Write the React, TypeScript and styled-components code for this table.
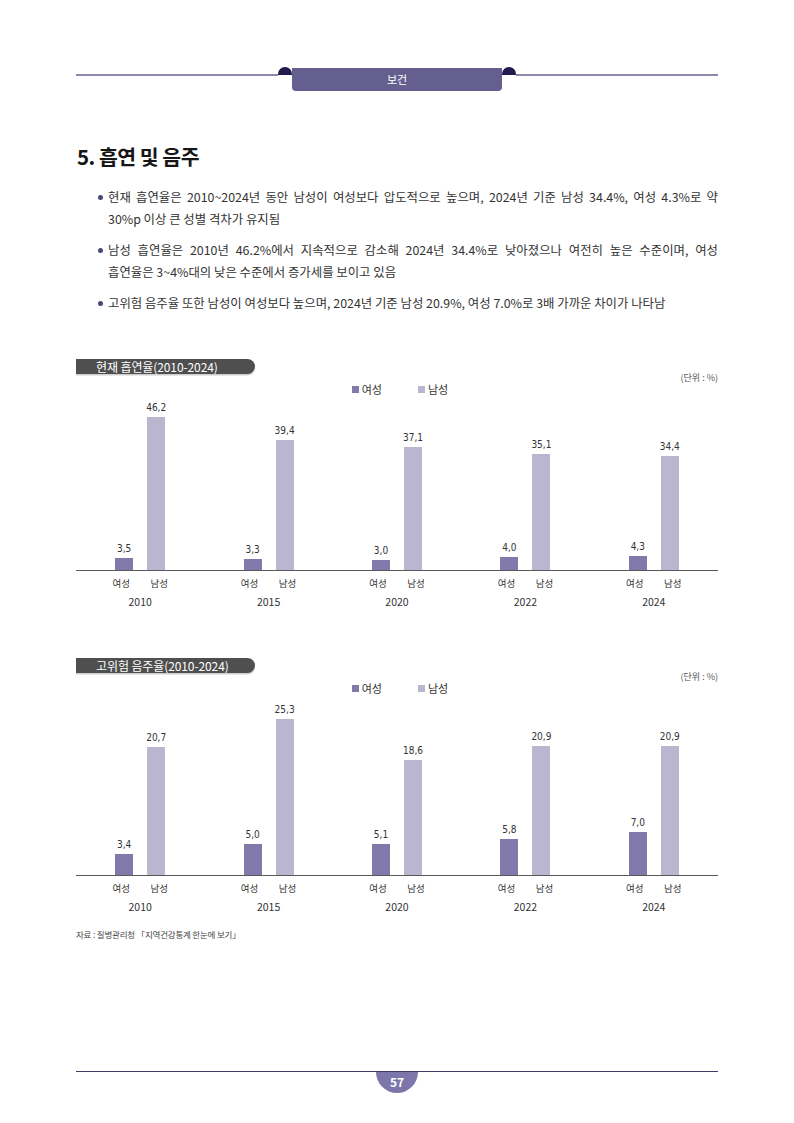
import styled, { createGlobalStyle } from 'styled-components';

const GlobalStyle = createGlobalStyle`
  html, body {
    margin: 0;
    padding: 0;
    background: #ffffff;
  }
  body {
    font-family: "Noto Sans CJK KR", "Noto Sans", sans-serif;
    color: #333333;
  }
`

const Page = styled.div`
    width: 794px;
    height: 1123px;
    box-sizing: border-box;
    padding: 67px 76px 30px;
    display: flex;
    flex-direction: column;
`

const Header = styled.header`
    display: flex;
    align-items: flex-start;
    height: 24px;
`

const HeaderLine = styled.div`
    flex: 1;
    height: 1.5px;
    margin-top: 7px;
    background: #8d89ad;
`

const Dome = styled.div`
    width: 14px;
    height: 8px;
    border-radius: 7px 7px 0 0;
    background: #221b4d;
`

const Tab = styled.div`
    width: 210px;
    height: 23px;
    margin-top: 1px;
    background: #655f8f;
    border-radius: 0 0 4px 4px;
    color: #ffffff;
    font-size: 11px;
    line-height: 22px;
    text-align: center;
`

const Title = styled.h1`
    margin: 51px 0 0 1px;
    font-size: 20.5px;
    line-height: 28px;
    font-weight: 700;
    letter-spacing: -0.5px;
    color: #161616;
`

const BulletList = styled.ul`
    list-style: none;
    margin: 16px 0 0;
    padding: 0;
`

const BulletItem = styled.li`
    display: flex;
    align-items: flex-start;
    & + & {
        margin-top: 9px;
    }
`

const Dot = styled.span`
    flex: none;
    width: 5px;
    height: 5px;
    border-radius: 50%;
    background: #4b4578;
    margin: 9px 5px 0 22px;
`

const BulletText = styled.div`
    flex: 1;
    font-size: 12.4px;
    line-height: 22px;
    color: #333333;
`

const Line = styled.span<{ $justify?: boolean }>`
    display: block;
    white-space: nowrap;
    text-align: ${p => p.$justify ? 'justify' : 'left'};
    text-align-last: ${p => p.$justify ? 'justify' : 'left'};
`

const ChartSection = styled.section<{ $top: number }>`
    margin-top: ${p => p.$top}px;
`

const ChartTitle = styled.div`
    width: 179px;
    height: 15px;
    box-sizing: border-box;
    padding-left: 20px;
    background: #4f4f4f;
    border-radius: 0 8px 8px 0;
    box-shadow: 0 1.5px 0 #cfcfcf;
    color: #ffffff;
    font-size: 12px;
    line-height: 15px;
    letter-spacing: -0.1px;
    white-space: nowrap;
`

const Meta = styled.div`
    display: flex;
    flex-direction: column;
    height: 21px;
`

const Unit = styled.div`
    align-self: flex-end;
    margin-top: -2px;
    font-size: 9px;
    line-height: 12px;
    color: #555555;
`

const Legend = styled.div`
    align-self: center;
    display: flex;
    gap: 36px;
    margin: -1px 0 0 6px;
    font-size: 11px;
    line-height: 12px;
    color: #333333;
`

const LegendItem = styled.span`
    display: flex;
    align-items: center;
    gap: 3px;
`

const Swatch = styled.i<{ $color: string }>`
    display: block;
    width: 7px;
    height: 7px;
    background: ${p => p.$color};
`

const Plot = styled.div<{ $h: number }>`
    display: grid;
    grid-template-columns: repeat(5, 1fr);
    align-items: end;
    height: ${p => p.$h}px;
    border-bottom: 1.5px solid #595959;
`

const Group = styled.div`
    display: flex;
    justify-content: center;
    align-items: flex-end;
`

const BarCol = styled.div`
    width: 32px;
    display: flex;
    flex-direction: column;
    align-items: center;
`

const Value = styled.span`
    font-family: "Liberation Sans Narrow", "DejaVu Sans Condensed", "Liberation Sans", sans-serif;
    font-size: 10px;
    line-height: 12px;
    margin-bottom: 3px;
    color: #333333;
`

const Bar = styled.div<{ $color: string }>`
    width: 18px;
    background: ${p => p.$color};
`

const Axis = styled.div`
    display: grid;
    grid-template-columns: repeat(5, 1fr);
`

const AxisGroup = styled.div`
    display: flex;
    flex-direction: column;
    align-items: center;
`

const GenderRow = styled.div`
    display: flex;
    gap: 6px;
    margin-top: 4.5px;
`

const GenderLabel = styled.span`
    width: 32px;
    text-align: center;
    font-size: 9.5px;
    line-height: 14px;
    color: #333333;
`

const Year = styled.span`
    margin-top: 5.5px;
    font-size: 10.5px;
    line-height: 14px;
    color: #333333;
`

const Source = styled.p`
    margin: 14px 0 0;
    font-size: 8.5px;
    line-height: 12px;
    letter-spacing: -0.2px;
    color: #444444;
`

const Footer = styled.footer`
    margin-top: auto;
    display: flex;
    flex-direction: column;
`

const FooterLine = styled.div`
    height: 1.5px;
    background: #3f3b65;
`

const PageBadge = styled.div`
    align-self: center;
    width: 42px;
    height: 21px;
    border-radius: 0 0 21px 21px;
    background: #7d76aa;
    color: #ffffff;
    font-size: 12px;
    font-weight: 700;
    line-height: 20px;
    text-align: center;
`

const FEMALE = '#8079aa';
const MALE = '#b9b6d0';

type Row = { year: string, female: number, male: number };

const smoking: Row[] = [
    { year: '2010', female: 3.5, male: 46.2 },
    { year: '2015', female: 3.3, male: 39.4 },
    { year: '2020', female: 3.0, male: 37.1 },
    { year: '2022', female: 4.0, male: 35.1 },
    { year: '2024', female: 4.3, male: 34.4 },
];

const drinking: Row[] = [
    { year: '2010', female: 3.4, male: 20.7 },
    { year: '2015', female: 5.0, male: 25.3 },
    { year: '2020', female: 5.1, male: 18.6 },
    { year: '2022', female: 5.8, male: 20.9 },
    { year: '2024', female: 7.0, male: 20.9 },
];

const fmt = (v: number) => v.toFixed(1).replace('.', ',');

function Chart({ title, data, scale, plotHeight, top }: { title: string, data: Row[], scale: number, plotHeight: number, top: number }){
  return (
    <ChartSection $top={top}>
        <ChartTitle>{title}</ChartTitle>
        <Meta>
            <Unit>(단위 : %)</Unit>
            <Legend>
                <LegendItem><Swatch $color={FEMALE} />여성</LegendItem>
                <LegendItem><Swatch $color={MALE} />남성</LegendItem>
            </Legend>
        </Meta>
        <Plot $h={plotHeight}>
            {data.map(d => (
                <Group key={d.year}>
                    <BarCol>
                        <Value>{fmt(d.female)}</Value>
                        <Bar $color={FEMALE} style={{ height: d.female * scale }} />
                    </BarCol>
                    <BarCol>
                        <Value>{fmt(d.male)}</Value>
                        <Bar $color={MALE} style={{ height: d.male * scale }} />
                    </BarCol>
                </Group>
            ))}
        </Plot>
        <Axis>
            {data.map(d => (
                <AxisGroup key={d.year}>
                    <GenderRow>
                        <GenderLabel>여성</GenderLabel>
                        <GenderLabel>남성</GenderLabel>
                    </GenderRow>
                    <Year>{d.year}</Year>
                </AxisGroup>
            ))}
        </Axis>
    </ChartSection>
  )
}

function App(){
  return (
    <>
        <GlobalStyle />
        <Page>
            <Header>
                <HeaderLine />
                <Dome />
                <Tab>보건</Tab>
                <Dome />
                <HeaderLine />
            </Header>

            <Title>5. 흡연 및 음주</Title>

            <BulletList>
                <BulletItem>
                    <Dot />
                    <BulletText>
                        <Line $justify>현재 흡연율은 2010~2024년 동안 남성이 여성보다 압도적으로 높으며, 2024년 기준 남성 34.4%, 여성 4.3%로 약</Line>
                        <Line>30%p 이상 큰 성별 격차가 유지됨</Line>
                    </BulletText>
                </BulletItem>
                <BulletItem>
                    <Dot />
                    <BulletText>
                        <Line $justify>남성 흡연율은 2010년 46.2%에서 지속적으로 감소해 2024년 34.4%로 낮아졌으나 여전히 높은 수준이며, 여성</Line>
                        <Line>흡연율은 3~4%대의 낮은 수준에서 증가세를 보이고 있음</Line>
                    </BulletText>
                </BulletItem>
                <BulletItem>
                    <Dot />
                    <BulletText>
                        <Line>고위험 음주율 또한 남성이 여성보다 높으며, 2024년 기준 남성 20.9%, 여성 7.0%로 3배 가까운 차이가 나타남</Line>
                    </BulletText>
                </BulletItem>
            </BulletList>

            <Chart title="현재 흡연율(2010-2024)" data={smoking} scale={3.31} plotHeight={175} top={45} />
            <Chart title="고위험 음주율(2010-2024)" data={drinking} scale={6.17} plotHeight={181} top={49} />

            <Source>자료 : 질병관리청 「지역건강통계 한눈에 보기」</Source>

            <Footer>
                <FooterLine />
                <PageBadge>57</PageBadge>
            </Footer>
        </Page>
    </>
  )
}

export default App
